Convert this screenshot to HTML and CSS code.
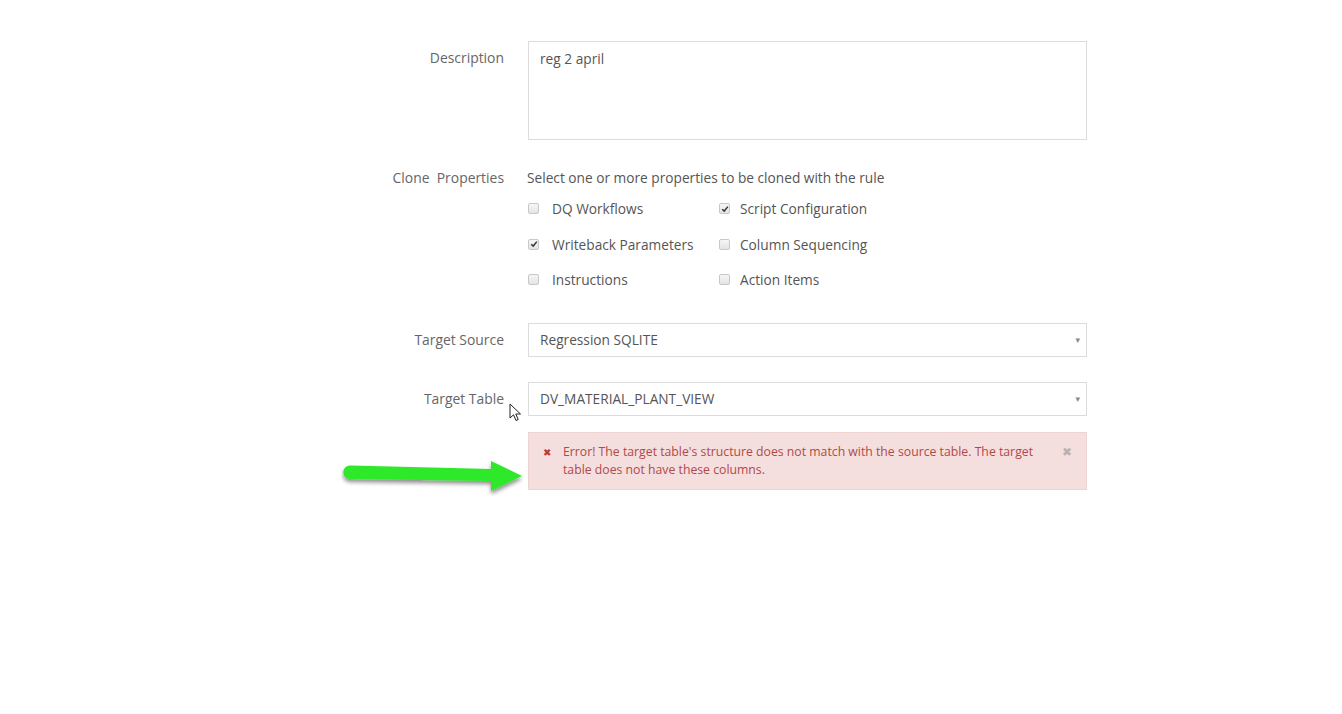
FILE: index.html
```html
<!DOCTYPE html>
<html>
<head>
<meta charset="utf-8">
<link rel="stylesheet" href="styles.css">
</head>
<body>
<div class="form">
  <div class="row row-desc">
    <div class="label">Description</div>
    <div class="field"><div class="textarea">reg 2 april</div></div>
  </div>

  <div class="row row-clone">
    <div class="label">Clone&nbsp; Properties</div>
    <div class="field">
      <div class="hint">Select one or more properties to be cloned with the rule</div>
      <div class="checks">
        <div class="check"><span class="box"></span><span>DQ Workflows</span></div>
        <div class="check"><span class="box checked"><svg viewBox="0 0 10 10" width="8" height="8"><path d="M1.5 5.2 L4 7.6 L8.6 2" fill="none" stroke="#333" stroke-width="1.8"/></svg></span><span>Script Configuration</span></div>
        <div class="check"><span class="box checked"><svg viewBox="0 0 10 10" width="8" height="8"><path d="M1.5 5.2 L4 7.6 L8.6 2" fill="none" stroke="#333" stroke-width="1.8"/></svg></span><span>Writeback Parameters</span></div>
        <div class="check"><span class="box"></span><span>Column Sequencing</span></div>
        <div class="check"><span class="box"></span><span>Instructions</span></div>
        <div class="check"><span class="box"></span><span>Action Items</span></div>
      </div>
    </div>
  </div>

  <div class="row row-source">
    <div class="label">Target Source</div>
    <div class="field"><div class="select"><span>Regression SQLITE</span><span class="caret">&#9662;</span></div></div>
  </div>

  <div class="row row-table">
    <div class="label">Target Table</div>
    <div class="field"><div class="select"><span>DV_MATERIAL_PLANT_VIEW</span><span class="caret">&#9662;</span></div></div>
  </div>

  <div class="row row-alert">
    <div class="label"></div>
    <div class="field">
      <div class="alert">
        <span class="alert-icon">&#10006;</span>
        <span class="alert-text">Error! The target table's structure does not match with the source table. The target table does not have these columns.</span>
        <span class="alert-close">&#10006;</span>
      </div>
    </div>
  </div>
</div>

<svg class="annot-arrow" width="190" height="44" viewBox="0 0 190 44">
  <defs>
    <filter id="sh" x="-10%" y="-30%" width="120%" height="180%">
      <feGaussianBlur in="SourceAlpha" stdDeviation="2"/>
      <feOffset dx="0" dy="3"/>
      <feComponentTransfer><feFuncA type="linear" slope="0.45"/></feComponentTransfer>
      <feMerge><feMergeNode/><feMergeNode in="SourceGraphic"/></feMerge>
    </filter>
  </defs>
  <g filter="url(#sh)">
    <path d="M9 13.5 L150 17 L150 9 L181 24 L150 39 L150 29 L9 27 A6.75 6.75 0 0 1 9 13.5 Z" fill="#2fe82a"/>
  </g>
</svg>

<svg class="cursor" width="14" height="20" viewBox="0 0 14 20">
  <path d="M1 1 L1 15 L4.5 11.8 L7 17.5 L9.2 16.5 L6.8 11 L11.5 11 Z" fill="#fff" stroke="#222" stroke-width="1" stroke-linejoin="round"/>
</svg>
</body>
</html>
```

FILE: styles.css
```css
html, body {
  margin: 0;
  padding: 0;
  background: #ffffff;
}
body {
  font-family: "Open Sans", "DejaVu Sans", sans-serif;
  font-size: 13.7px;
  color: #555555;
  position: relative;
  width: 1342px;
  height: 714px;
  overflow: hidden;
}
.form {
  padding-top: 41px;
  padding-left: 380px;
  display: flex;
  flex-direction: column;
}
.row {
  display: grid;
  grid-template-columns: 124px 559px;
  column-gap: 24px;
}
.label {
  text-align: right;
  color: #666666;
  line-height: 20px;
  font-size: 13.9px;
}
.row-desc .label { padding-top: 7px; }
.textarea {
  box-sizing: border-box;
  height: 99px;
  border: 1px solid #dcdcdc;
  padding: 7px 11px;
  line-height: 20px;
  color: #555555;
}
.row-clone { margin-top: 28px; }
.hint {
  line-height: 20px;
  color: #555555;
  margin-left: -1px;
}
.checks {
  margin-top: 3px;
  display: grid;
  grid-template-columns: 191px 1fr;
  grid-auto-rows: 35.5px;
}
.check {
  display: flex;
  align-items: center;
  gap: 13px;
  color: #555555;
}
.check:nth-child(even) { gap: 10px; }
.box {
  box-sizing: border-box;
  width: 11px;
  height: 11px;
  border: 1px solid #c8c8c8;
  border-radius: 2px;
  background: linear-gradient(#f6f6f6, #e4e4e4);
  display: flex;
  align-items: center;
  justify-content: center;
}
.row-source { margin-top: 25px; }
.row-source .label, .row-table .label { line-height: 34px; }
.select {
  box-sizing: border-box;
  height: 34px;
  border: 1px solid #dcdcdc;
  padding: 0 6px 0 11px;
  display: flex;
  align-items: center;
  justify-content: space-between;
  color: #555555;
}
.caret {
  font-size: 9px;
  color: #888888;
}
.row-table { margin-top: 25px; }
.row-alert { margin-top: 16px; }
.alert {
  box-sizing: border-box;
  min-height: 58px;
  background: #f5dede;
  border: 1px solid #efd3d3;
  padding: 10px 14px 10px 14px;
  display: flex;
  align-items: flex-start;
  color: #b04a48;
  font-size: 12.25px;
  line-height: 18px;
}
.alert-icon {
  width: 20px;
  flex: none;
  font-size: 10px;
  color: #c0392b;
}
.alert-text {
  flex: 1;
  margin-right: 22px;
}
.alert-close {
  flex: none;
  font-size: 12px;
  color: #b9b0b0;
}
.annot-arrow {
  position: absolute;
  left: 341px;
  top: 452px;
}
.cursor {
  position: absolute;
  left: 509px;
  top: 403px;
}
```
